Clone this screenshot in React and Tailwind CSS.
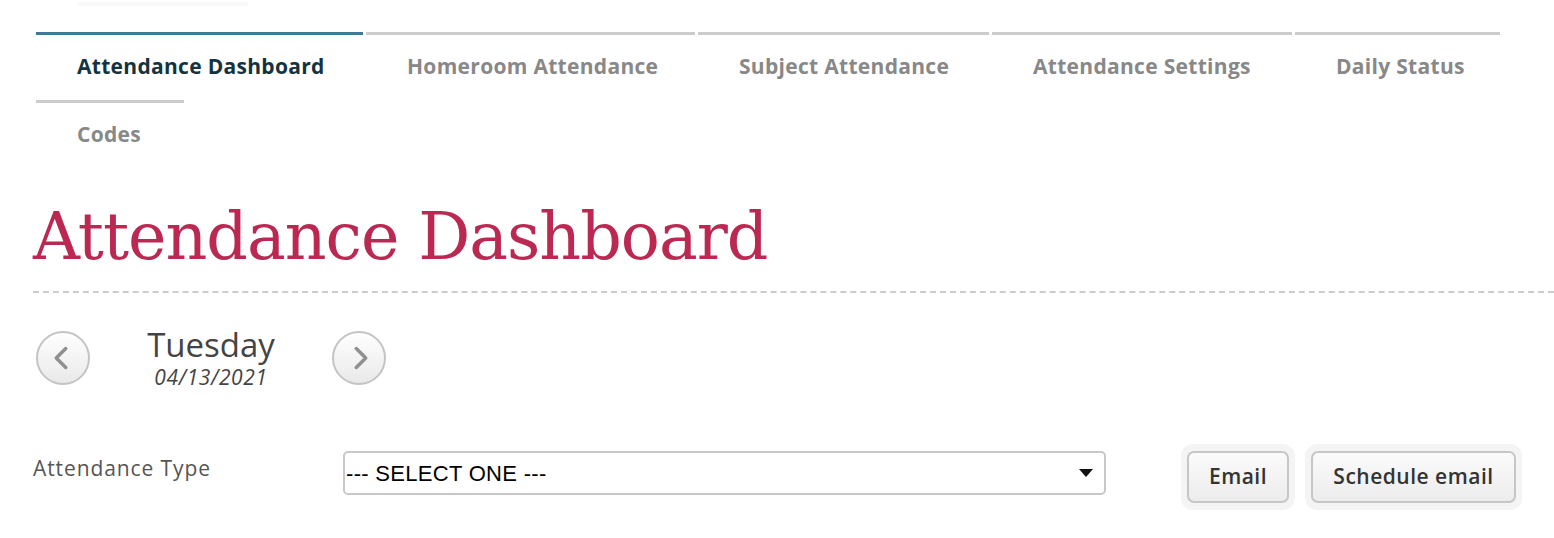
import { ChevronLeft, ChevronRight } from 'lucide-react'

const TABS = [
  { label: 'Attendance Dashboard', w: 'w-[327px]', active: true },
  { label: 'Homeroom Attendance', w: 'w-[329px]' },
  { label: 'Subject Attendance', w: 'w-[291px]' },
  { label: 'Attendance Settings', w: 'w-[300px]' },
  { label: 'Daily Status', w: 'w-[205px]' },
  { label: 'Codes', w: 'w-[148px]' },
]

function NavCircle({ dir }) {
  return (
    <button className="w-[54px] h-[54px] rounded-full border-2 border-[#c4c4c4] bg-gradient-to-b from-white to-[#e9e9e9] flex items-center justify-center text-[#909090] shrink-0">
      {dir === 'left' ? <ChevronLeft size={38} strokeWidth={2.2} className="-ml-1" /> : <ChevronRight size={38} strokeWidth={2.2} className="ml-1" />}
    </button>
  )
}

export default function App() {
  return (
    <div className="w-[1554px] h-[538px] bg-white overflow-hidden relative" style={{ fontFamily: '"Open Sans", Lato, sans-serif' }}>
      <div className="absolute left-[77px] top-[2px] w-[171px] h-[4px] bg-[#fafafa]" />

      {/* ── tabs ── */}
      <div className="pt-[32px] pl-[36px] w-[1520px] flex flex-wrap gap-x-[3px]">
        {TABS.map((t) => (
          <div
            key={t.label}
            className={`${t.w} border-t-[3px] ${t.active ? 'border-[#3b7b9a] text-[#15323f]' : 'border-[#cccccc] text-[#888888]'} pl-[41px] pt-[18px] pb-[20px] text-[21px] leading-[27px] tracking-[0.3px] font-bold whitespace-nowrap`}
          >
            {t.label}
          </div>
        ))}
      </div>

      {/* ── heading ── */}
      <div className="ml-[33px] mt-[34px] pb-[19px] border-b-2 border-dashed border-[#cccccc]">
        <h1 className="text-[#bb2952] text-[65px] leading-[70px] font-normal tracking-[-1px]" style={{ fontFamily: '"DejaVu Serif", serif' }}>
          Attendance Dashboard
        </h1>
      </div>

      {/* ── date nav ── */}
      <div className="flex items-center ml-[36px] mt-[36px] h-[58px]">
        <NavCircle dir="left" />
        <div className="w-[242px] flex flex-col items-center text-[#444]">
          <span className="text-[33px] leading-[34px]">Tuesday</span>
          <span className="mt-[3px] text-[21px] leading-[24px] italic tracking-[0.6px]">04/13/2021</span>
        </div>
        <NavCircle dir="right" />
      </div>

      {/* ── type row ── */}
      <div className="flex items-start ml-[33px] mt-[57px]">
        <span className="w-[310px] mt-[11px] text-[21px] leading-[26px] tracking-[0.9px] text-[#555]">Attendance Type</span>
        <div
          className="mt-[7px] w-[763px] h-[44px] rounded-[5px] border-2 border-[#c8c8c8] bg-white flex items-center justify-between pl-[1px] pr-[10px] text-[22px] tracking-[0.3px] text-black"
          style={{ fontFamily: '"Liberation Sans", Arial, sans-serif' }}
        >
          <span>--- SELECT ONE ---</span>
          <svg width="16" height="10" viewBox="0 0 16 10"><path d="M1 1h14L8 9z" fill="#111" /></svg>
        </div>
        <div className="ml-[75px] flex gap-[10px]">
          {[{ b: 'Email', w: 'w-[102px]' }, { b: 'Schedule email', w: 'w-[205px]' }].map(({ b, w }) => (
            <div key={b} className="px-[6px] py-[7px] rounded-[12px] bg-[#f4f4f4]">
              <button className={`${w} h-[52px] rounded-[7px] border-2 border-[#c6c6c6] bg-gradient-to-b from-[#fbfbfb] to-[#ececec] text-[21px] tracking-[0.5px] font-semibold text-[#333]`}>
                {b}
              </button>
            </div>
          ))}
        </div>
      </div>
    </div>
  )
}
